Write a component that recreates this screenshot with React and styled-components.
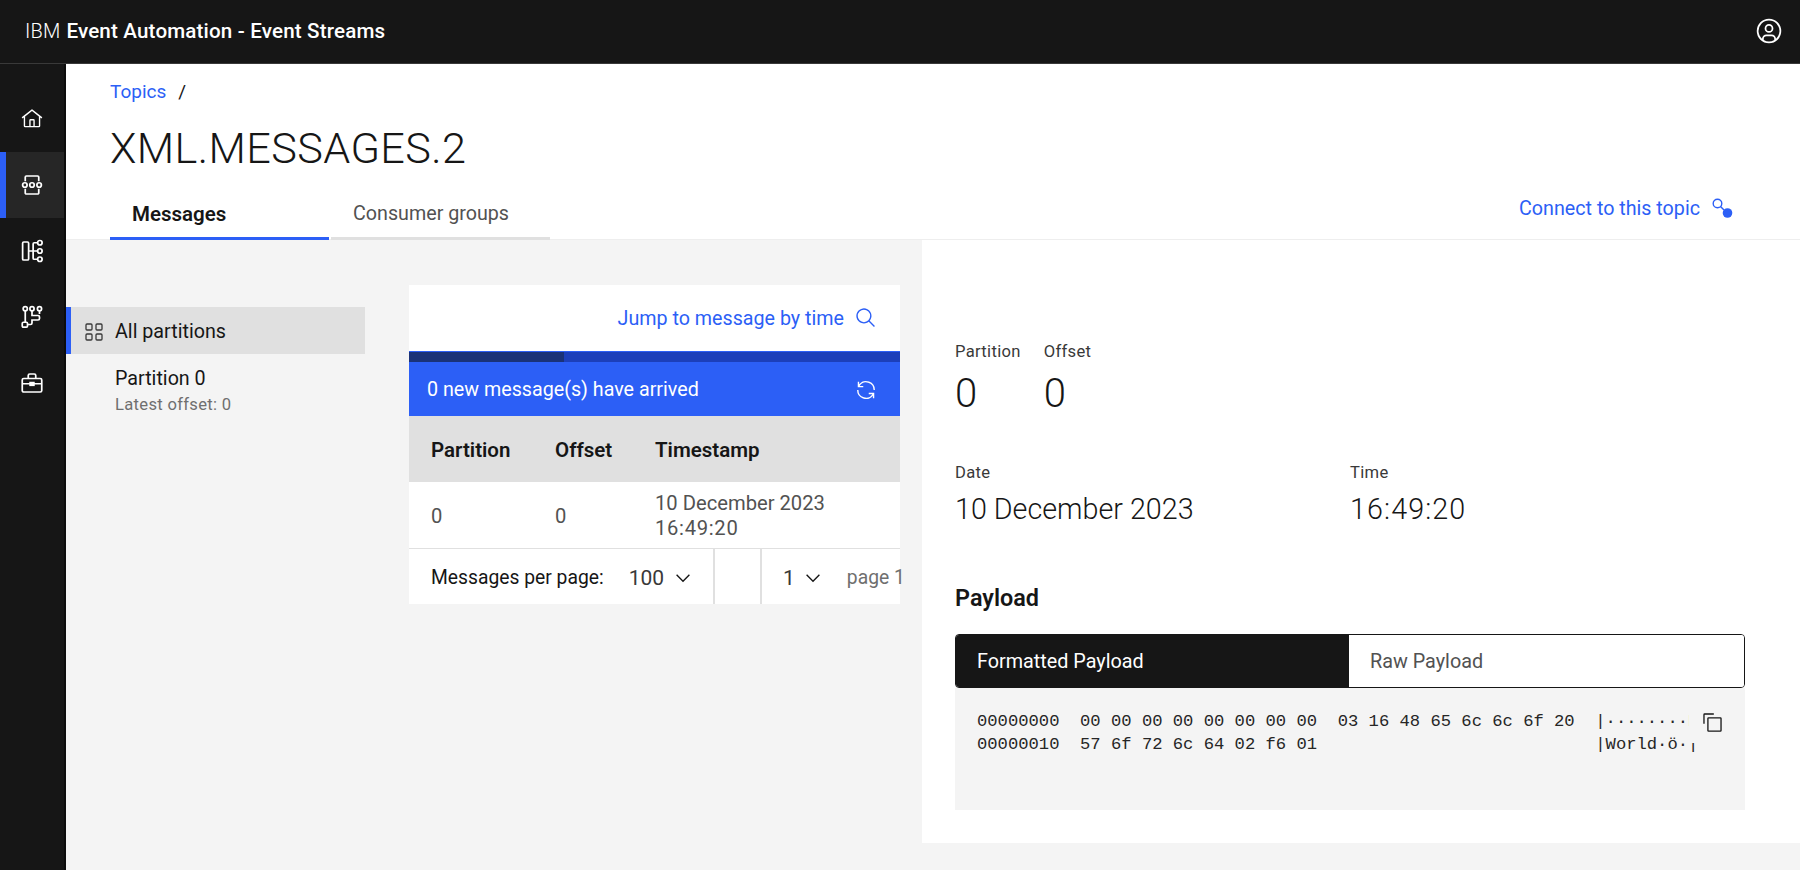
import styled, {createGlobalStyle} from "styled-components";

const GlobalStyle = createGlobalStyle`
    html, body {
        margin: 0;
        padding: 0;
        height: 100%;
        overflow: hidden;
        background: #f4f4f4;
        font-family: "Roboto", "Liberation Sans", sans-serif;
        color: #161616;
    }
    #root {
        height: 100%;
    }
`;

const BLUE = "#2c5ff6";

const Page = styled.div`
    display: flex;
    flex-direction: column;
    height: 870px;
`;

const TopBar = styled.header`
    display: flex;
    align-items: center;
    justify-content: space-between;
    box-sizing: border-box;
    height: 64px;
    padding: 0 17px 2px 25px;
    background: #161616;
    border-bottom: 1px solid #393939;
    color: #fff;
`;

const Brand = styled.div`
    font-size: 20.6px;
    font-weight: 500;
    letter-spacing: 0.16px;
    white-space: nowrap;

    span {
        font-size: 20px;
        font-weight: 300;
        margin-right: 6px;
    }
`;

const Body = styled.div`
    display: flex;
    flex: 1;
    min-height: 0;
`;

const SideNav = styled.nav`
    display: flex;
    flex-direction: column;
    box-sizing: border-box;
    width: 66px;
    padding-top: 22px;
    background: #161616;
    border-right: 2px solid #0c0c0c;
`;

const NavItem = styled.div`
    display: flex;
    align-items: center;
    justify-content: center;
    height: 66px;
    background: ${(p) => (p.$active ? "#262626" : "transparent")};
    box-shadow: ${(p) => (p.$active ? `inset 6px 0 0 ${BLUE}` : "none")};
    color: #fff;
`;

const Main = styled.main`
    display: flex;
    flex-direction: column;
    flex: 1;
    min-width: 0;
`;

const TopicHeader = styled.section`
    display: flex;
    flex-direction: column;
    flex: none;
    box-sizing: border-box;
    height: 176px;
    padding: 16px 0 0 44px;
    background: #fff;
    border-bottom: 1px solid #eeeeee;
`;

const Breadcrumb = styled.div`
    display: flex;
    gap: 12px;
    font-size: 19px;
    line-height: 24px;

    a {
        color: ${BLUE};
    }
`;

const Title = styled.h1`
    margin: 17px 0 0;
    font-size: 43.2px;
    font-weight: 300;
    line-height: 56px;
    letter-spacing: 0.4px;
`;

const TabRow = styled.div`
    display: flex;
    align-items: flex-end;
    justify-content: space-between;
    margin-top: auto;
    margin-bottom: -1px;
    padding-right: 66px;
`;

const Tabs = styled.div`
    display: flex;
    gap: 2px;
`;

const Tab = styled.div`
    box-sizing: border-box;
    width: 219px;
    height: 47px;
    padding: 9px 0 0 22px;
    border-bottom: 3px solid ${(p) => (p.$active ? BLUE : "#e0e0e0")};
    font-size: ${(p) => (p.$active ? 20.5 : 19.7)}px;
    font-weight: ${(p) => (p.$active ? 600 : 400)};
    color: ${(p) => (p.$active ? "#161616" : "#525252")};
`;

const ConnectLink = styled.div`
    display: flex;
    align-items: center;
    gap: 12px;
    padding-bottom: 20px;
    font-size: 19.7px;
    color: ${BLUE};
`;

const Content = styled.div`
    display: flex;
    flex: 1;
    min-height: 0;
`;

const PartitionList = styled.aside`
    flex: none;
    width: 299px;
    padding-top: 67px;
`;

const PartitionAll = styled.div`
    display: flex;
    align-items: center;
    gap: 12px;
    box-sizing: border-box;
    height: 47px;
    padding: 2px 0 0 14px;
    background: #e0e0e0;
    border-left: 5px solid ${BLUE};
    font-size: 19.7px;
`;

const PartitionItem = styled.div`
    padding: 12px 0 0 49px;
    font-size: 19.7px;
    line-height: 26px;
`;

const PartitionOffset = styled.div`
    margin-top: 1px;
    font-size: 16.6px;
    line-height: 24px;
    color: #6f6f6f;
    letter-spacing: 0.3px;
`;

const TableCard = styled.div`
    flex: none;
    align-self: flex-start;
    width: 491px;
    margin: 45px 0 0 44px;
`;

const JumpBar = styled.div`
    display: flex;
    align-items: center;
    justify-content: flex-end;
    gap: 11px;
    box-sizing: border-box;
    height: 66px;
    padding-right: 23px;
    background: #fff;
    font-size: 19.7px;
    color: ${BLUE};
`;

const Progress = styled.div`
    height: 11px;
    background: #1c3fba;
    border-top: 1px solid ${BLUE};
    box-sizing: border-box;
`;

const ProgressFill = styled.div`
    height: 100%;
    background: #1a3278;
`;

const Notice = styled.div`
    display: flex;
    align-items: center;
    justify-content: space-between;
    box-sizing: border-box;
    height: 54px;
    padding: 1px 23px 0 18px;
    background: ${BLUE};
    color: #fff;
    font-size: 19.7px;
`;

const Grid = styled.div`
    display: grid;
    grid-template-columns: 124px 100px 1fr;
    align-items: center;
    box-sizing: border-box;
    height: ${(p) => p.$height}px;
    padding: 1px 0 0 22px;
    background: ${(p) => (p.$head ? "#e0e0e0" : "#fff")};
    border-bottom: ${(p) => (p.$head ? "none" : "1px solid #e0e0e0")};
    font-size: ${(p) => (p.$head ? 20.5 : 20.2)}px;
    font-weight: ${(p) => (p.$head ? 600 : 400)};
    color: ${(p) => (p.$head ? "#161616" : "#525252")};
`;

const TimeCell = styled.div`
    line-height: 25px;
`;

const Clock = styled.span`
    letter-spacing: ${(p) => p.$spacing}px;
`;

const Pager = styled.div`
    display: flex;
    height: 55px;
    padding-top: 0;
    background: #fff;
    font-size: 19.3px;
`;

const PagerCell = styled.div`
    display: flex;
    align-items: center;
    flex: none;
    box-sizing: border-box;
    width: ${(p) => p.$width}px;
    padding: 2px 0 0 ${(p) => p.$pad || 0}px;
    border-right: ${(p) => (p.$last ? "none" : "2px solid #e0e0e0")};
    white-space: nowrap;
`;

const PagerValue = styled.span`
    margin-left: ${(p) => p.$left}px;
    font-size: 21px;
    color: #393939;
`;

const PagerChevron = styled.span`
    display: flex;
    margin-left: ${(p) => p.$left}px;
`;

const PageLabel = styled.span`
    margin-left: 23px;
    color: #6f6f6f;
`;

const Detail = styled.section`
    flex: 1;
    min-width: 0;
    box-sizing: border-box;
    margin: 0 0 27px 22px;
    padding: 101px 55px 0 33px;
    background: #fff;
`;

const Facts = styled.div`
    display: flex;
    gap: ${(p) => p.$gap}px;
    margin-bottom: ${(p) => p.$bottom}px;
`;

const Fact = styled.div`
    width: ${(p) => (p.$width ? `${p.$width}px` : "auto")};
`;

const FactLabel = styled.div`
    font-size: 16.6px;
    line-height: 22px;
    color: #393939;
    letter-spacing: 0.3px;
`;

const FactValue = styled.div`
    margin-top: 7px;
    font-size: ${(p) => (p.$big ? 40 : 28.7)}px;
    font-weight: 300;
    line-height: ${(p) => (p.$big ? 48 : 36)}px;
`;

const PayloadTitle = styled.h2`
    margin: 0 0 22px;
    font-size: 23.4px;
    font-weight: 600;
    line-height: 28px;
`;

const Switcher = styled.div`
    display: flex;
    box-sizing: border-box;
    height: 54px;
    border: 1px solid #161616;
    border-radius: 4px;
    overflow: hidden;
    font-size: 19.8px;
`;

const SwitchOption = styled.div`
    display: flex;
    align-items: center;
    flex: ${(p) => (p.$active ? "none" : 1)};
    box-sizing: border-box;
    width: ${(p) => (p.$active ? "393px" : "auto")};
    padding-left: 21px;
    background: ${(p) => (p.$active ? "#161616" : "#fff")};
    color: ${(p) => (p.$active ? "#fff" : "#525252")};
`;

const CodeBlock = styled.div`
    position: relative;
    box-sizing: border-box;
    height: 122px;
    padding: 22px 22px 0;
    background: #f4f4f4;
`;

const Hex = styled.pre`
    margin: 0;
    overflow: hidden;
    font-family: "Liberation Mono", "DejaVu Sans Mono", monospace;
    font-size: 17.18px;
    line-height: 23px;
    color: #262626;
`;

const CopyButton = styled.div`
    position: absolute;
    top: 13px;
    right: 18px;
    display: flex;
    align-items: center;
    box-sizing: border-box;
    width: 38px;
    height: 42px;
    padding-left: 13px;
    background: #f4f4f4;
`;

const Icon = ({size = 22, children, color = "currentColor"}) => (
    <svg width={size} height={size} viewBox="0 0 32 32" fill={color}>
        {children}
    </svg>
);

const Chevron = () => (
    <Icon size={22}>
        <path d="M16 22 6 12l1.4-1.4 8.6 8.6 8.6-8.6L26 12z" />
    </Icon>
);

const Line = ({children, size = 24}) => (
    <svg width={size} height={size} viewBox="0 0 32 32" fill="none" stroke="currentColor" strokeWidth="2.3">
        {children}
    </svg>
);

const hexRows = [
    "00000000  00 00 00 00 00 00 00 00  03 16 48 65 6c 6c 6f 20".padEnd(60) + "|········Hello |",
    "00000010  57 6f 72 6c 64 02 f6 01".padEnd(60) + "|World·ö·|",
];

function App() {
    return (
        <>
            <GlobalStyle />
            <Page>
                <TopBar>
                    <Brand>
                        <span>IBM</span>Event Automation - Event Streams
                    </Brand>
                    <Icon size={28}>
                        <path d="M16 8a5 5 0 1 0 5 5 5 5 0 0 0-5-5Zm0 8a3 3 0 1 1 3-3 3.0034 3.0034 0 0 1-3 3Z" />
                        <path d="M16 2a14 14 0 1 0 14 14A14.0158 14.0158 0 0 0 16 2Zm-6 24.3765V25a3.0033 3.0033 0 0 1 3-3h6a3.0033 3.0033 0 0 1 3 3v1.3765a11.8989 11.8989 0 0 1-12 0Zm13.9925-1.4507A5.0016 5.0016 0 0 0 19 20h-6a5.0016 5.0016 0 0 0-4.9925 4.9258 12 12 0 1 1 15.985 0Z" />
                    </Icon>
                </TopBar>
                <Body>
                    <SideNav>
                        <NavItem>
                            <Icon>
                                <path d="M16.6 2.2a1 1 0 0 0-1.2 0L1 13.5l1.2 1.6L4 13.7V26a2 2 0 0 0 2 2h20a2 2 0 0 0 2-2V13.7l1.8 1.4 1.2-1.6ZM18 26h-4v-8h4Zm2 0v-8a2 2 0 0 0-2-2h-4a2 2 0 0 0-2 2v8H6V12.2l10-7.8 10 7.8V26Z" />
                            </Icon>
                        </NavItem>
                        <NavItem $active>
                            <Line>
                                <path d="M7 11V5.500A1.500 1.500 0 0 1 8.500 4h15A1.500 1.500 0 0 1 25 5.500V11" />
                                <path d="M7 21v5.500A1.500 1.500 0 0 0 8.500 28h15a1.500 1.500 0 0 0 1.500-1.500V21" />
                                <circle cx="6.500" cy="16" r="3" />
                                <circle cx="16" cy="16" r="3" />
                                <circle cx="25.500" cy="16" r="3" />
                            </Line>
                        </NavItem>
                        <NavItem>
                            <Line>
                                <rect x="3.500" y="4" width="8" height="24" rx="1.500" />
                                <circle cx="26.500" cy="5" r="3" />
                                <circle cx="26.500" cy="16" r="3" />
                                <circle cx="26.500" cy="27" r="3" />
                                <path d="M11.500 16h12M23.500 5H19a1.500 1.500 0 0 0-1.500 1.500v19A1.500 1.500 0 0 0 19 27h4.500" />
                            </Line>
                        </NavItem>
                        <NavItem>
                            <Line>
                                <circle cx="7" cy="5" r="2.800" />
                                <circle cx="16" cy="5" r="2.800" />
                                <circle cx="26" cy="5" r="2.800" />
                                <rect x="3" y="23" width="7" height="6.500" rx="1.500" />
                                <path d="M7 8v15M16 8v6h8a2 2 0 0 1 2 2v2a2 2 0 0 1-2 2h-8v4a2 2 0 0 1-2 2h-4M26 8v4" />
                            </Line>
                        </NavItem>
                        <NavItem>
                            <Line>
                                <rect x="3" y="10" width="26" height="18" rx="2" />
                                <path d="M11 10V6a2 2 0 0 1 2-2h6a2 2 0 0 1 2 2v4M3 17h26" />
                                <rect x="13.500" y="15.500" width="5" height="3.500" fill="currentColor" />
                            </Line>
                        </NavItem>
                    </SideNav>
                    <Main>
                        <TopicHeader>
                            <Breadcrumb>
                                <a>Topics</a>
                                <span>/</span>
                            </Breadcrumb>
                            <Title>XML.MESSAGES.2</Title>
                            <TabRow>
                                <Tabs>
                                    <Tab $active>Messages</Tab>
                                    <Tab>Consumer groups</Tab>
                                </Tabs>
                                <ConnectLink>
                                    Connect to this topic
                                    <svg width="22" height="22" viewBox="0 0 22 22" fill="none">
                                        <circle cx="5.500" cy="5.500" r="4.300" stroke={BLUE} strokeWidth="1.400" />
                                        <path d="M8.500 8.500l3.500 3.500" stroke={BLUE} strokeWidth="1.400" />
                                        <circle cx="15.500" cy="15" r="4.800" fill={BLUE} />
                                    </svg>
                                </ConnectLink>
                            </TabRow>
                        </TopicHeader>
                        <Content>
                            <PartitionList>
                                <PartitionAll>
                                    <svg width="18" height="18" viewBox="0 0 18 18" fill="none" stroke="#393939" strokeWidth="1.300">
                                        <rect x="1" y="1" width="6" height="6" rx="1" />
                                        <rect x="11" y="1" width="6" height="6" rx="1" />
                                        <rect x="1" y="11" width="6" height="6" rx="1" />
                                        <rect x="11" y="11" width="6" height="6" rx="1" />
                                    </svg>
                                    All partitions
                                </PartitionAll>
                                <PartitionItem>
                                    Partition 0
                                    <PartitionOffset>Latest offset: 0</PartitionOffset>
                                </PartitionItem>
                            </PartitionList>
                            <TableCard>
                                <JumpBar>
                                    Jump to message by time
                                    <Icon size={22}>
                                        <path d="M29 27.5859l-7.5521-7.5521a11.0177 11.0177 0 1 0-1.4141 1.4141L27.5859 29ZM4 13a9 9 0 1 1 9 9A9.01 9.01 0 0 1 4 13Z" />
                                    </Icon>
                                </JumpBar>
                                <Progress>
                                    <ProgressFill style={{width: "31.5%"}} />
                                </Progress>
                                <Notice>
                                    0 new message(s) have arrived
                                    <Icon size={22}>
                                        <path d="M12 10H6.78A11 11 0 0 1 27 16h2A13 13 0 0 0 6 7.68V4H4v8h8zM20 22h5.22A11 11 0 0 1 5 16H3a13 13 0 0 0 23 8.32V28h2v-8h-8z" />
                                    </Icon>
                                </Notice>
                                <Grid $head $height={66}>
                                    <div>Partition</div>
                                    <div>Offset</div>
                                    <div>Timestamp</div>
                                </Grid>
                                <Grid $height={67}>
                                    <div>0</div>
                                    <div>0</div>
                                    <TimeCell>
                                        10 December 2023
                                        <br />
                                        <Clock $spacing={0.7}>16:49:20</Clock>
                                    </TimeCell>
                                </Grid>
                                <Pager>
                                    <PagerCell $width={306} $pad={22}>
                                        Messages per page:
                                        <PagerValue $left={25}>100</PagerValue>
                                        <PagerChevron $left={8}>
                                            <Chevron />
                                        </PagerChevron>
                                    </PagerCell>
                                    <PagerCell $width={47} />
                                    <PagerCell $width={137} $last>
                                        <PagerValue $left={21}>1</PagerValue>
                                        <PagerChevron $left={7}>
                                            <Chevron />
                                        </PagerChevron>
                                        <PageLabel>page 1</PageLabel>
                                    </PagerCell>
                                </Pager>
                            </TableCard>
                            <Detail>
                                <Facts $gap={23} $bottom={44}>
                                    <Fact>
                                        <FactLabel>Partition</FactLabel>
                                        <FactValue $big>0</FactValue>
                                    </Fact>
                                    <Fact>
                                        <FactLabel>Offset</FactLabel>
                                        <FactValue $big>0</FactValue>
                                    </Fact>
                                </Facts>
                                <Facts $gap={0} $bottom={57}>
                                    <Fact $width={395}>
                                        <FactLabel>Date</FactLabel>
                                        <FactValue>10 December 2023</FactValue>
                                    </Fact>
                                    <Fact>
                                        <FactLabel>Time</FactLabel>
                                        <FactValue>
                                            <Clock $spacing={1.1}>16:49:20</Clock>
                                        </FactValue>
                                    </Fact>
                                </Facts>
                                <PayloadTitle>Payload</PayloadTitle>
                                <Switcher>
                                    <SwitchOption $active>Formatted Payload</SwitchOption>
                                    <SwitchOption>Raw Payload</SwitchOption>
                                </Switcher>
                                <CodeBlock>
                                    <Hex>{hexRows.join("\n")}</Hex>
                                    <CopyButton>
                                        <Icon size={21} color="#161616">
                                            <path d="M28 10v18H10V10h18m0-2H10a2 2 0 0 0-2 2v18a2 2 0 0 0 2 2h18a2 2 0 0 0 2-2V10a2 2 0 0 0-2-2Z" />
                                            <path d="M4 18H2V4a2 2 0 0 1 2-2h14v2H4Z" />
                                        </Icon>
                                    </CopyButton>
                                </CodeBlock>
                            </Detail>
                        </Content>
                    </Main>
                </Body>
            </Page>
        </>
    );
}

export default App;
